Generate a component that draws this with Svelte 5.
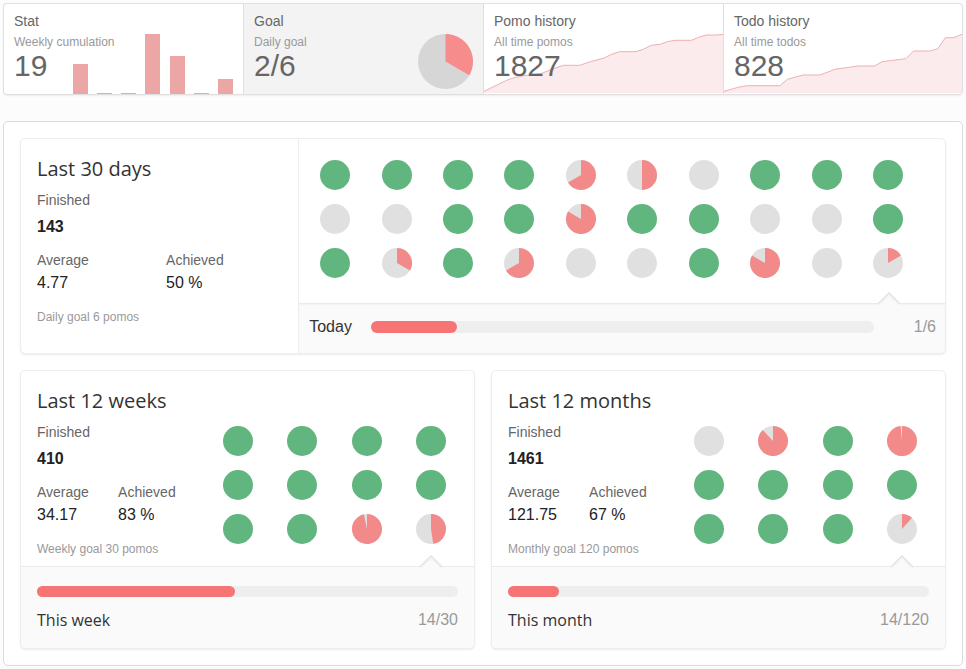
<script>
  const bars = [
    [0, 30], [24, 1], [48, 1], [72, 60], [97, 38], [121, 1], [145, 15]
  ];

  const pomoLine = '0,57.3 22.7,46.3 29.3,44 39.3,41.7 56.7,39.7 68.7,35 79.3,31.3 96,31.3 104.3,28.3 120,24 127.7,20.3 135.3,17.7 152,17.7 159.3,15.3 167.3,11.3 176.3,10.3 183.3,7.7 191,6.3 207.7,6.3 214.3,3.3 222.7,1 232.7,1 239,0.4';
  const todoLine = '0,57.3 15.3,53 23.7,51.7 56,51.7 63.7,45.3 79.3,41 96,41 103.7,38.3 111.3,35.3 134.7,32 151.3,32 158.7,27.7 182.7,24.7 190.3,17 207,17 214.7,14.7 222.3,3.7 230.7,3.7 239,0.2';

  const tabs = [
    { title: 'Stat', sub: 'Weekly cumulation', value: '19', chart: 'bars' },
    { title: 'Goal', sub: 'Daily goal', value: '2/6', chart: 'pie' },
    { title: 'Pomo history', sub: 'All time pomos', value: '1827', chart: 'line', points: pomoLine },
    { title: 'Todo history', sub: 'All time todos', value: '828', chart: 'line', points: todoLine }
  ];
  let active = $state(1);

  const days = [
    1, 1, 1, 1, 4 / 6, 3 / 6, 0, 1, 1, 1,
    0, 0, 1, 1, 5 / 6, 1, 1, 0, 0, 1,
    1, 2 / 6, 1, 4 / 6, 0, 0, 1, 5 / 6, 0, 1 / 6
  ];

  const periods = [
    {
      title: 'Last 12 weeks', finished: '410', average: '34.17', achieved: '83 %',
      goal: 'Weekly goal 30 pomos', label: 'This week', count: '14/30', percent: 47,
      dots: [1, 1, 1, 1, 1, 1, 1, 1, 1, 1, 29 / 30, 14 / 30 + 0.01]
    },
    {
      title: 'Last 12 months', finished: '1461', average: '121.75', achieved: '67 %',
      goal: 'Monthly goal 120 pomos', label: 'This month', count: '14/120', percent: 12,
      dots: [0, 0.88, 1, 0.985, 1, 1, 1, 1, 1, 1, 1, 14 / 120]
    }
  ];

  function slice(f, r) {
    const a = f * 2 * Math.PI;
    const x = r + r * Math.sin(a);
    const y = r - r * Math.cos(a);
    return `M${r} ${r}V0A${r} ${r} 0 ${f > 0.5 ? 1 : 0} 1 ${x} ${y}Z`;
  }
</script>

{#snippet dot(f)}
  <svg class="dot" viewBox="0 0 30 30" aria-hidden="true">
    <circle cx="15" cy="15" r="15" fill={f === 1 ? '#61b57e' : '#e0e0e0'} />
    {#if f > 0 && f < 1}<path d={slice(f, 15)} fill="#f28a89" />{/if}
  </svg>
{/snippet}

{#snippet arrow()}
  <svg class="arrow" viewBox="0 0 24 14" aria-hidden="true">
    <path d="M0 13L12 1L24 13V14H0Z" fill="#fafafa" />
    <path d="M1 12L12 1L23 12" fill="none" stroke="#e2e2e2" stroke-width="1.5" />
    <path d="M2 13L12 3L22 13" fill="none" stroke="#f3f3f3" stroke-width="1.5" />
  </svg>
{/snippet}

{#snippet summary(title, finished, average, achieved, goal)}
  <div class="summary">
    <h2>{title}</h2>
    <dl class="finished"><dt>Finished</dt><dd>{finished}</dd></dl>
    <div class="pair">
      <dl><dt>Average</dt><dd>{average}</dd></dl>
      <dl><dt>Achieved</dt><dd>{achieved}</dd></dl>
    </div>
    <p class="goal">{goal}</p>
  </div>
{/snippet}

<main>
  <nav class="tabs">
    {#each tabs as tab, i}
      <button class="tab" class:active={active === i} onclick={() => (active = i)}>
        {#if tab.chart === 'bars'}
          <svg class="chart bars" viewBox="0 0 160 60" aria-hidden="true">
            {#each bars as [x, h]}
              <rect {x} y={60 - h} width="15" height={h} fill="#eca6a6" />
            {/each}
          </svg>
        {:else if tab.chart === 'pie'}
          <svg class="chart pie" viewBox="0 0 55 55" aria-hidden="true">
            <circle cx="27.5" cy="27.5" r="27.5" fill="#d6d6d6" />
            <path d={slice(1 / 3, 27.5)} fill="#f68d8c" />
          </svg>
        {:else}
          <svg class="chart area" viewBox="0 0 239 60" preserveAspectRatio="none" aria-hidden="true">
            <polygon points={`0,59 ${tab.points} 239,59`} fill="#fbebec" />
            <polyline points={tab.points} fill="none" stroke="#eeb0b0" />
          </svg>
        {/if}
        <span class="name">{tab.title}</span>
        <span class="sub">{tab.sub}</span>
        <span class="value">{tab.value}</span>
      </button>
    {/each}
  </nav>

  <section class="panel">
    <article class="card daily">
      {@render summary('Last 30 days', '143', '4.77', '50 %', 'Daily goal 6 pomos')}
      <div class="history">
        <div class="dots ten">
          {#each days as f}{@render dot(f)}{/each}
        </div>
        <footer class="today">
          {@render arrow()}
          <span class="label">Today</span>
          <div class="track" role="progressbar" aria-label="Today" aria-valuenow="17"><div class="fill" style:width="17%"></div></div>
          <span class="count">1/6</span>
        </footer>
      </div>
    </article>

    <div class="columns">
      {#each periods as p}
        <article class="card">
          <div class="body">
            {@render summary(p.title, p.finished, p.average, p.achieved, p.goal)}
            <div class="dots four">
              {#each p.dots as f}{@render dot(f)}{/each}
            </div>
          </div>
          <footer class="current">
            {@render arrow()}
            <div class="track" role="progressbar" aria-label={p.label} aria-valuenow={p.percent}><div class="fill" style:width="{p.percent}%"></div></div>
            <div class="line">
              <span class="label">{p.label}</span>
              <span class="count">{p.count}</span>
            </div>
          </footer>
        </article>
      {/each}
    </div>
  </section>
</main>

<style>
  :global(body) {
    background: #fcfcfc;
  }

  main {
    padding: 3px;
    font-family: "Liberation Sans", Arial, sans-serif;
    font-size: 14px;
    line-height: 20px;
    color: #666;
  }

  main * {
    box-sizing: border-box;
  }

  h2, p, dl, dd {
    margin: 0;
  }

  .tabs {
    display: grid;
    grid-template-columns: repeat(4, 1fr);
    margin-bottom: 26px;
    border-radius: 4px;
    box-shadow: 0 1px 2px rgba(0, 0, 0, 0.06);
  }

  .tab {
    position: relative;
    display: flex;
    flex-direction: column;
    align-items: flex-start;
    min-height: 92px;
    padding: 7px 10px;
    border: 1px solid #dfdfdf;
    border-right-width: 0;
    background: #fff;
    font: inherit;
    color: #666;
    text-align: left;
    cursor: pointer;
  }

  .tab:first-child {
    border-radius: 4px 0 0 4px;
  }

  .tab:last-child {
    border-right-width: 1px;
    border-radius: 0 4px 4px 0;
  }

  .tab.active {
    background: #f3f3f3;
  }

  .name, .sub, .value {
    position: relative;
  }

  .sub {
    margin-top: 1px;
    font-size: 12px;
    color: #999;
  }

  .value {
    font-size: 30px;
    line-height: 28px;
  }

  .chart {
    position: absolute;
    bottom: 0;
    height: 60px;
  }

  .bars {
    right: 10px;
    width: 160px;
  }

  .pie {
    right: 10px;
    bottom: 5px;
    width: 55px;
    height: 55px;
  }

  .area {
    left: 0;
    width: 100%;
  }

  .panel {
    display: flex;
    flex-direction: column;
    gap: 16px;
    padding: 16px;
    border: 1px solid #dcdcdc;
    border-radius: 5px;
    background: #fff;
  }

  .card {
    border: 1px solid #eee;
    border-radius: 5px;
    background: #fff;
    box-shadow: 0 1px 2px rgba(0, 0, 0, 0.08);
  }

  .daily {
    display: grid;
    grid-template-columns: 3fr 7fr;
  }

  .columns {
    display: grid;
    grid-template-columns: 1fr 1fr;
    gap: 16px;
  }

  .body {
    display: grid;
    grid-template-columns: 2fr 3fr;
  }

  .summary {
    padding: 16px 3px 7px 16px;
  }

  h2 {
    font: 400 20px/28px "Open Sans", sans-serif;
    color: #333;
    white-space: nowrap;
  }

  dd {
    font-size: 16px;
    color: #222;
    margin-top: 3px;
  }

  .finished {
    margin-top: 7px;
  }

  .finished dd {
    margin-top: 7px;
    font-weight: 700;
  }

  .pair {
    display: grid;
    grid-template-columns: 1fr 1fr;
    margin-top: 13px;
  }

  .goal {
    margin-top: 14px;
    font-size: 12px;
    color: #999;
  }

  .history {
    border-left: 1px solid #eee;
  }

  .dots {
    display: grid;
    align-content: start;
    justify-content: space-between;
    row-gap: 14px;
  }

  .ten {
    grid-template-columns: repeat(10, 30px);
    padding: 21px 42px 25px 21px;
  }

  .four {
    grid-template-columns: repeat(4, 30px);
    padding: 55px 28px 22px 21px;
  }

  .dot {
    display: block;
    width: 30px;
    height: 30px;
  }

  footer {
    position: relative;
    border-top: 1px solid #eaeaea;
    background: #fafafa;
  }

  .arrow {
    position: absolute;
    top: -12px;
    right: 31px;
    width: 24px;
    height: 14px;
  }

  .today {
    display: flex;
    align-items: center;
    height: 50px;
    padding: 0 9px 4px 10px;
    border-radius: 0 0 5px 0;
    box-shadow: inset 0 1px 2px rgba(0, 0, 0, 0.04);
  }

  .today .arrow {
    right: 44px;
  }

  .today .label, .today .count {
    width: 62px;
  }

  .today .track {
    flex: 1;
    height: 12px;
  }

  .current {
    padding: 19px 16px 18px;
    border-radius: 0 0 5px 5px;
  }

  .line {
    display: flex;
    justify-content: space-between;
    margin-top: 13px;
  }

  .line .label {
    font-family: "Open Sans", sans-serif;
  }

  .label {
    font-size: 16px;
    color: #333;
  }

  .count {
    font-size: 16px;
    color: #999;
    text-align: right;
  }

  .track {
    height: 11px;
    border-radius: 6px;
    background: #eee;
  }

  .fill {
    height: 100%;
    border-radius: 6px;
    background: #f77474;
  }
</style>
